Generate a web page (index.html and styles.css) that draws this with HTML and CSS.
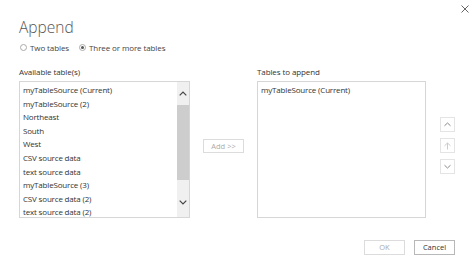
FILE: index.html
```html
<!DOCTYPE html>
<html>
<head>
<meta charset="utf-8">
<link rel="stylesheet" href="styles.css">
</head>
<body>
<div class="dialog">
  <div class="header">
    <h1 class="title">Append</h1>
    <svg class="close" width="8" height="8" viewBox="0 0 8 8"><path d="M0.5 0.5L7.5 7.5M7.5 0.5L0.5 7.5" stroke="#666" stroke-width="1" fill="none"/></svg>
  </div>
  <div class="radios">
    <label class="radio"><span class="dot"></span>Two tables</label>
    <label class="radio"><span class="dot on"></span>Three or more tables</label>
  </div>
  <div class="main">
    <div class="col-left">
      <div class="label">Available table(s)</div>
      <div class="listbox">
        <ul class="items">
          <li>myTableSource (Current)</li>
          <li>myTableSource (2)</li>
          <li>Northeast</li>
          <li>South</li>
          <li>West</li>
          <li>CSV source data</li>
          <li>text source data</li>
          <li>myTableSource (3)</li>
          <li>CSV source data (2)</li>
          <li>text source data (2)</li>
        </ul>
        <div class="scrollbar">
          <div class="sb-btn"><svg width="8" height="5" viewBox="0 0 8 5"><path d="M0.7 4.3L4 1L7.3 4.3" stroke="#444" stroke-width="1.2" fill="none"/></svg></div>
          <div class="thumb"></div>
          <div class="sb-rest"><svg width="8" height="5" viewBox="0 0 8 5"><path d="M0.7 0.7L4 4L7.3 0.7" stroke="#444" stroke-width="1.2" fill="none"/></svg></div>
        </div>
      </div>
    </div>
    <div class="col-mid">
      <button class="btn add">Add &gt;&gt;</button>
    </div>
    <div class="col-right">
      <div class="label">Tables to append</div>
      <div class="listbox right">
        <ul class="items">
          <li>myTableSource (Current)</li>
        </ul>
      </div>
    </div>
    <div class="col-tools">
      <div class="tool"><svg width="7" height="5" viewBox="0 0 7 5"><path d="M0.5 3.8L3.5 1L6.5 3.8" stroke="#888" stroke-width="1" fill="none"/></svg></div>
      <div class="tool"><svg width="7" height="8" viewBox="0 0 7 8"><path d="M0.5 3.8L3.5 1L6.5 3.8M3.5 1V7.5" stroke="#ccc" stroke-width="1" fill="none"/></svg></div>
      <div class="tool"><svg width="7" height="5" viewBox="0 0 7 5"><path d="M0.5 1.2L3.5 4L6.5 1.2" stroke="#888" stroke-width="1" fill="none"/></svg></div>
    </div>
  </div>
  <div class="footer">
    <button class="btn ok">OK</button>
    <button class="btn cancel">Cancel</button>
  </div>
</div>
</body>
</html>
```
FILE: styles.css
```css
html, body {
  margin: 0;
  padding: 0;
  background: #ffffff;
}
body {
  width: 474px;
  height: 274px;
  overflow: hidden;
  font-family: "Open Sans", "Noto Sans", sans-serif;
  color: #333333;
}
.dialog {
  padding: 0 19px 0 19px;
  box-sizing: border-box;
  width: 474px;
  height: 274px;
}
.header {
  display: flex;
  justify-content: space-between;
  align-items: flex-start;
  height: 40px;
}
.title {
  margin: 17px 0 0 0;
  font-size: 15.5px;
  font-weight: 300;
  color: #555555;
  line-height: 20px;
  letter-spacing: 0;
}
.close {
  margin-top: 5px;
  margin-right: -14px;
}
.radios {
  display: flex;
  gap: 9px;
  height: 15px;
  align-items: center;
  font-size: 8px;
  color: #444;
  letter-spacing: -0.1px;
}
.radio {
  display: flex;
  align-items: center;
  gap: 3px;
}
.dot {
  width: 5px;
  height: 5px;
  border: 1px solid #aaa;
  border-radius: 50%;
  box-sizing: content-box;
  position: relative;
  margin-left: 1px;
}
.dot.on::after {
  content: "";
  position: absolute;
  left: 1px;
  top: 1px;
  width: 3px;
  height: 3px;
  border-radius: 50%;
  background: #555;
}
.main {
  display: flex;
  margin-top: 10px;
}
.label {
  font-size: 8px;
  line-height: 14px;
  height: 14px;
  margin-bottom: 2px;
  color: #333;
  letter-spacing: -0.1px;
}
.col-left {
  width: 171px;
}
.listbox {
  display: flex;
  height: 137px;
  border: 1px solid #d6d6d6;
  box-sizing: border-box;
}
.items {
  list-style: none;
  margin: 0;
  padding: 1px 0 0 3px;
  flex: 1;
  font-size: 8px;
  line-height: 13.6px;
  color: #333;
  letter-spacing: -0.17px;
}
.scrollbar {
  width: 12px;
  background: #f0f0f0;
  display: flex;
  flex-direction: column;
}
.sb-btn {
  height: 23px;
  display: flex;
  justify-content: center;
  align-items: center;
}
.thumb {
  height: 75px;
  background: #cdcdcd;
}
.sb-rest {
  flex: 1;
  display: flex;
  justify-content: center;
  align-items: flex-end;
  padding-bottom: 12px;
}
.col-mid {
  width: 67px;
  display: flex;
  justify-content: center;
  align-items: flex-start;
  box-sizing: border-box;
  padding: 74px 0 0 0;
}
.btn {
  font-family: "Open Sans", "Noto Sans", sans-serif;
  background: #ffffff;
  border: 1px solid #dcdcdc;
  padding: 0;
  margin: 0;
  font-size: 7.5px;
  color: #aaaaaa;
}
.add {
  width: 41px;
  height: 14px;
  line-height: 12px;
}
.col-right {
  width: 169px;
}
.col-tools {
  flex: 1;
  display: flex;
  flex-direction: column;
  align-items: flex-end;
  gap: 6px;
  padding-top: 52px;
}
.tool {
  width: 15px;
  height: 15px;
  border: 1px solid #e4e4e4;
  box-sizing: border-box;
  display: flex;
  justify-content: center;
  align-items: center;
}
.footer {
  display: flex;
  justify-content: flex-end;
  gap: 9px;
  margin-top: 22px;
}
.ok, .cancel {
  width: 41px;
  height: 15px;
  line-height: 13px;
}
.ok {
  color: #aaaaaa;
}
.cancel {
  color: #333333;
  border-color: #b8b8b8;
}
```
